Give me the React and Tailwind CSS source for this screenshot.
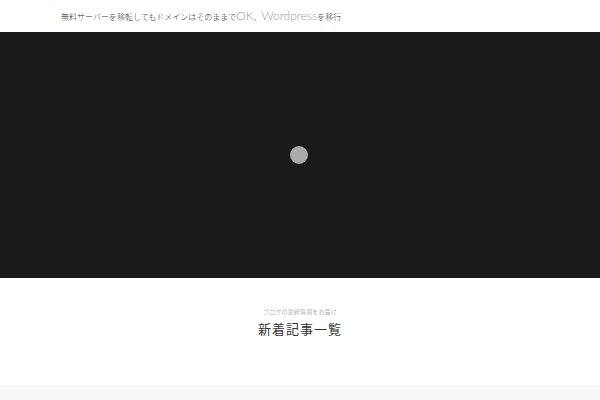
export default function App() {
  return (
    <div className="h-screen w-full bg-white overflow-hidden" style={{ fontFamily: 'Lato, "Noto Sans CJK JP", sans-serif' }}>
      {/* Header */}
      <header className="h-[32px] flex items-center px-[61px] bg-white">
        <h1 className="text-[12px] font-light text-[#999] leading-none whitespace-nowrap">
          <span className="text-[8px] text-[#333]">無料サーバーを移転してもドメインはそのままで</span>
          OK
          <span className="text-[8px] text-[#333]">、</span>
          Wordpress
          <span className="text-[8px] text-[#333]">を移行</span>
        </h1>
      </header>

      {/* Hero / loading */}
      <section className="h-[246px] bg-[#1a1a1a] flex items-center justify-center">
        <div className="w-[18px] h-[18px] rounded-full bg-[#ababab] mr-[2px] -mt-[1px]" />
      </section>

      {/* Section title */}
      <section className="h-[107px] flex flex-col items-center pt-[31px]">
        <p className="text-[6px] text-[#b5b5b5] leading-none tracking-wide">ブログの最新情報をお届け</p>
        <h2 className="mt-[8px] text-[13px] text-[#333] leading-none tracking-[1px]">新着記事一覧</h2>
      </section>

      {/* Next section */}
      <section className="h-[15px] bg-[#f6f8f8]" />
    </div>
  );
}
